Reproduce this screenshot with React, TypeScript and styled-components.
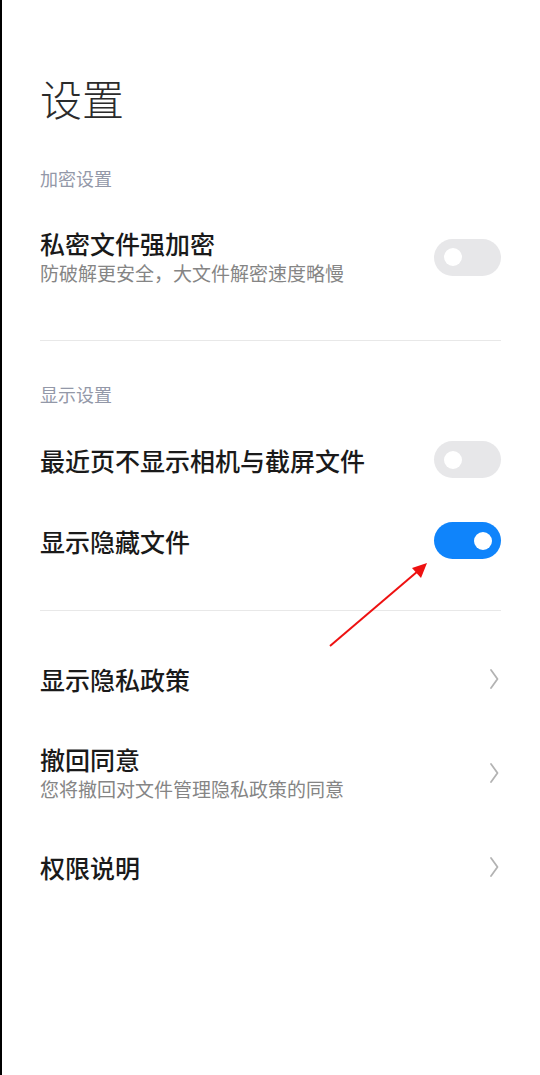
import React from "react";
import styled, { createGlobalStyle } from "styled-components";

const GlobalStyle = createGlobalStyle`
  html, body {
    margin: 0;
    padding: 0;
    background: #ffffff;
  }
  body {
    font-family: "Noto Sans CJK SC", "Noto Sans", sans-serif;
    -webkit-font-smoothing: antialiased;
  }
  * { box-sizing: border-box; }
`;

const Page = styled.div`
  position: relative;
  width: 540px;
  min-height: 1075px;
  background: #ffffff;
  border-left: 2px solid #000000;
  padding: 0 39px 0 38px;
  display: flex;
  flex-direction: column;
`;

const PageTitle = styled.h1`
  margin: 77px 0 34px;
  font-size: 42px;
  line-height: 42px;
  font-weight: 300;
  color: #2b2b2b;
`;

const SectionHeader = styled.div`
  margin: 13px 0 13px;
  font-size: 18px;
  line-height: 24px;
  color: #9398a8;
`;

const Row = styled.div`
  display: flex;
  align-items: center;
  justify-content: space-between;
  padding: 22px 0;
`;

const TextBlock = styled.div`
  display: flex;
  flex-direction: column;
  padding: 2px 0;
`;

const RowTitle = styled.div`
  font-size: 25px;
  line-height: 32px;
  font-weight: 500;
  color: #1a1a1a;
`;

const RowSub = styled.div`
  font-size: 19px;
  line-height: 28px;
  color: #858585;
`;

const Divider = styled.div`
  height: 1px;
  background: #e8e8e8;
  margin: 29px 0 28px;
`;

const Track = styled.div<{ $on: boolean }>`
  flex: none;
  width: 67px;
  height: 37px;
  border-radius: 19px;
  background: ${(p) => (p.$on ? "#0f84fb" : "#e7e7e9")};
  display: flex;
  align-items: center;
  justify-content: ${(p) => (p.$on ? "flex-end" : "flex-start")};
  padding: ${(p) => (p.$on ? "0 9px 0 0" : "0 0 0 10px")};
`;

const Knob = styled.div`
  width: 18px;
  height: 18px;
  border-radius: 50%;
  background: #ffffff;
`;

const ChevronWrap = styled.div`
  flex: none;
  display: flex;
  align-items: center;
  padding-right: 2px;
`;

const ArrowOverlay = styled.svg`
  position: absolute;
  left: 320px;
  top: 552px;
  pointer-events: none;
`;

const Toggle = ({ on }: { on: boolean }) => (
  <Track $on={on}>
    <Knob />
  </Track>
);

const Chevron = () => (
  <ChevronWrap>
    <svg width="10" height="22" viewBox="0 0 10 22">
      <path
        d="M2 2 L8.5 11 L2 20"
        fill="none"
        stroke="#b3b3b3"
        strokeWidth="1.8"
        strokeLinecap="round"
        strokeLinejoin="round"
      />
    </svg>
  </ChevronWrap>
);

export default function App() {
  return (
    <>
      <GlobalStyle />
      <Page>
        <PageTitle>设置</PageTitle>

        <SectionHeader>加密设置</SectionHeader>
        <Row>
          <TextBlock>
            <RowTitle>私密文件强加密</RowTitle>
            <RowSub>防破解更安全，大文件解密速度略慢</RowSub>
          </TextBlock>
          <Toggle on={false} />
        </Row>

        <Divider />

        <SectionHeader>显示设置</SectionHeader>
        <Row>
          <TextBlock>
            <RowTitle>最近页不显示相机与截屏文件</RowTitle>
          </TextBlock>
          <Toggle on={false} />
        </Row>
        <Row>
          <TextBlock>
            <RowTitle>显示隐藏文件</RowTitle>
          </TextBlock>
          <Toggle on={true} />
        </Row>

        <Divider />

        <Row>
          <TextBlock>
            <RowTitle>显示隐私政策</RowTitle>
          </TextBlock>
          <Chevron />
        </Row>
        <Row>
          <TextBlock>
            <RowTitle>撤回同意</RowTitle>
            <RowSub>您将撤回对文件管理隐私政策的同意</RowSub>
          </TextBlock>
          <Chevron />
        </Row>
        <Row>
          <TextBlock>
            <RowTitle>权限说明</RowTitle>
          </TextBlock>
          <Chevron />
        </Row>

        <ArrowOverlay width="115" height="100" viewBox="0 0 115 100">
          <line x1="8" y1="94" x2="96" y2="19" stroke="#ee1111" strokeWidth="2" />
          <polygon points="105,11 90,16 99,26" fill="#ee1111" />
        </ArrowOverlay>
      </Page>
    </>
  );
}
